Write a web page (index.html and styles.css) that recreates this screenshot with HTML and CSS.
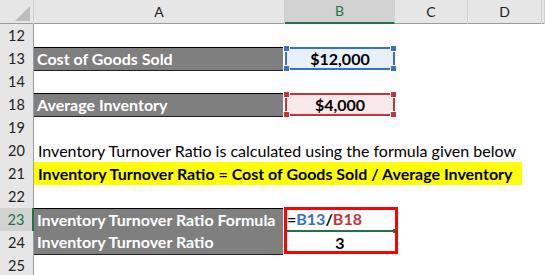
FILE: index.html
```html
<!DOCTYPE html>
<html lang="en">
<head>
    <meta charset="UTF-8">
    <title>Inventory Turnover Ratio</title>
    <link rel="stylesheet" href="styles.css">
</head>
<body>
<div class="sheet">
    <div class="row head">
        <div class="corner"><span class="corner-mark"></span></div>
        <div class="col-head">A</div>
        <div class="col-head active">B</div>
        <div class="col-head">C</div>
        <div class="col-head">D</div>
        <div class="col-head"></div>
    </div>

    <div class="row">
        <div class="num">12</div>
        <div class="cell"></div><div class="cell"></div><div class="cell"></div><div class="cell"></div><div class="cell"></div>
    </div>

    <div class="row">
        <div class="num">13</div>
        <div class="cell label top">Cost of Goods Sold</div>
        <div class="cell">
            <div class="ref ref-blue">$12,000
                <span class="handle tl"></span><span class="handle tr"></span>
                <span class="handle bl"></span><span class="handle br"></span>
            </div>
        </div>
        <div class="cell"></div><div class="cell"></div><div class="cell"></div>
    </div>

    <div class="row">
        <div class="num">14</div>
        <div class="cell"></div><div class="cell"></div><div class="cell"></div><div class="cell"></div><div class="cell"></div>
    </div>

    <div class="row">
        <div class="num">18</div>
        <div class="cell label top">Average Inventory</div>
        <div class="cell">
            <div class="ref ref-red">$4,000
                <span class="handle tl"></span><span class="handle tr"></span>
                <span class="handle bl"></span><span class="handle br"></span>
            </div>
        </div>
        <div class="cell"></div><div class="cell"></div><div class="cell"></div>
    </div>

    <div class="row">
        <div class="num">19</div>
        <div class="cell"></div><div class="cell"></div><div class="cell"></div><div class="cell"></div><div class="cell"></div>
    </div>

    <div class="row">
        <div class="num">20</div>
        <div class="cell spill">Inventory Turnover Ratio is calculated using the formula given below</div>
        <div class="cell"></div><div class="cell"></div><div class="cell"></div><div class="cell"></div>
    </div>

    <div class="row">
        <div class="num">21</div>
        <div class="cell spill"><span class="highlight">Inventory Turnover Ratio = Cost of Goods Sold / Average Inventory</span></div>
        <div class="cell"></div><div class="cell"></div><div class="cell"></div><div class="cell"></div>
    </div>

    <div class="row">
        <div class="num">22</div>
        <div class="cell"></div><div class="cell"></div><div class="cell"></div><div class="cell"></div><div class="cell"></div>
    </div>

    <div class="row">
        <div class="num active">23</div>
        <div class="cell label top">Inventory Turnover Ratio Formula</div>
        <div class="cell editing">
            <span class="op">=</span><span class="blue">B13</span><span class="op">/</span><span class="red">B18</span>
            <span class="edit-handle"></span>
        </div>
        <div class="cell"></div><div class="cell"></div><div class="cell"></div>
    </div>

    <div class="row">
        <div class="num">24</div>
        <div class="cell label">Inventory Turnover Ratio</div>
        <div class="cell value">3</div>
        <div class="cell"></div><div class="cell"></div><div class="cell"></div>
    </div>

    <div class="row">
        <div class="num">25</div>
        <div class="cell"></div><div class="cell"></div><div class="cell"></div><div class="cell"></div><div class="cell"></div>
    </div>

    <!-- red outline drawn over B23:B24 -->
    <div class="callout"></div>
</div>
</body>
</html>
```

FILE: styles.css
```css
:root {
    --header-bg: #e6e6e6;
    --header-active: #d2d2d2;
    --header-line: #9b9b9b;
    --header-sep: #d0d0d0;
    --excel-green: #217346;
    --label-bg: #7f7f7f;
    --ref-blue: #3a6fc4;
    --ref-red: #c4343f;
    --font-cell: Lato, 'Open Sans', Arial, sans-serif;
}

* {
    box-sizing: border-box;
    margin: 0;
    padding: 0;
}

body {
    background: #fff;
    font-family: var(--font-cell);
    font-size: 16px;
    color: #000;
    width: 545px;
    height: 275px;
    overflow: hidden;
}

.sheet {
    position: relative;
    width: 545px;
}

.row {
    display: grid;
    grid-template-columns: 34px 251px 110px 73px 74px 1fr;
    height: 23px;
}

.row.head {
    height: 24px;
    background: var(--header-bg);
    border-bottom: 1px solid var(--header-line);
}

.corner {
    position: relative;
    border-right: 1px solid var(--header-sep);
}

.corner-mark {
    position: absolute;
    right: 3px;
    bottom: 3px;
    width: 0;
    height: 0;
    border-left: 15px solid transparent;
    border-bottom: 15px solid #bcbcbc;
}

.col-head {
    text-align: center;
    line-height: 23px;
    font-size: 14px;
    color: #222;
    border-right: 1px solid var(--header-sep);
}

.col-head.active {
    background: var(--header-active);
    color: var(--excel-green);
    border-bottom: 2px solid var(--excel-green);
    line-height: 22px;
}

.num {
    background: var(--header-bg);
    border-right: 1px solid var(--header-line);
    border-bottom: 1px solid var(--header-sep);
    text-align: center;
    line-height: 23px;
    font-size: 14.5px;
    color: #222;
}

.num.active {
    background: var(--header-active);
    color: var(--excel-green);
    border-right: 2px solid var(--excel-green);
}

.cell {
    line-height: 23px;
    white-space: nowrap;
    min-width: 0;
}

.spill {
    overflow: visible;
    padding-left: 4px;
}

.label {
    background: var(--label-bg);
    color: #fff;
    font-weight: bold;
    padding-left: 3px;
    border-bottom: 1px solid #222;
    margin-right: 2px;
    line-height: 22px;
}

.label.top {
    border-top: 1px solid #000;
    line-height: 21px;
}

.highlight {
    display: inline-block;
    width: 488px;
    margin-left: -4px;
    padding-left: 4px;
    background: #ffff00;
    font-weight: bold;
}

.ref {
    position: relative;
    height: 23px;
    text-align: center;
    font-weight: bold;
    line-height: 19px;
}

.ref-blue {
    background: #e8f0fa;
    border: 2px solid var(--ref-blue);
}

.ref-red {
    background: #f9e9e9;
    border: 2px solid var(--ref-red);
}

.handle {
    position: absolute;
    width: 5px;
    height: 5px;
    outline: 1px solid #fff;
}

.ref-blue .handle {
    background: var(--ref-blue);
}

.ref-red .handle {
    background: var(--ref-red);
}

.handle.tl { left: -3px; top: -3px; }
.handle.tr { right: -3px; top: -3px; }
.handle.bl { left: -3px; bottom: -3px; }
.handle.br { right: -3px; bottom: -3px; }

.editing {
    position: relative;
    font-weight: bold;
    padding-left: 2px;
    border-bottom: 2px solid var(--excel-green);
    line-height: 22px;
}

.editing .op {
    color: #000;
}

.editing .blue {
    color: var(--ref-blue);
}

.editing .red {
    color: var(--ref-red);
}

.edit-handle {
    position: absolute;
    right: -2px;
    bottom: -3px;
    width: 4px;
    height: 4px;
    background: var(--excel-green);
}

.value {
    text-align: center;
    font-weight: bold;
}

.callout {
    position: absolute;
    left: 284px;
    top: 207px;
    width: 114px;
    height: 47px;
    border: 3px solid #ff0000;
}
```
